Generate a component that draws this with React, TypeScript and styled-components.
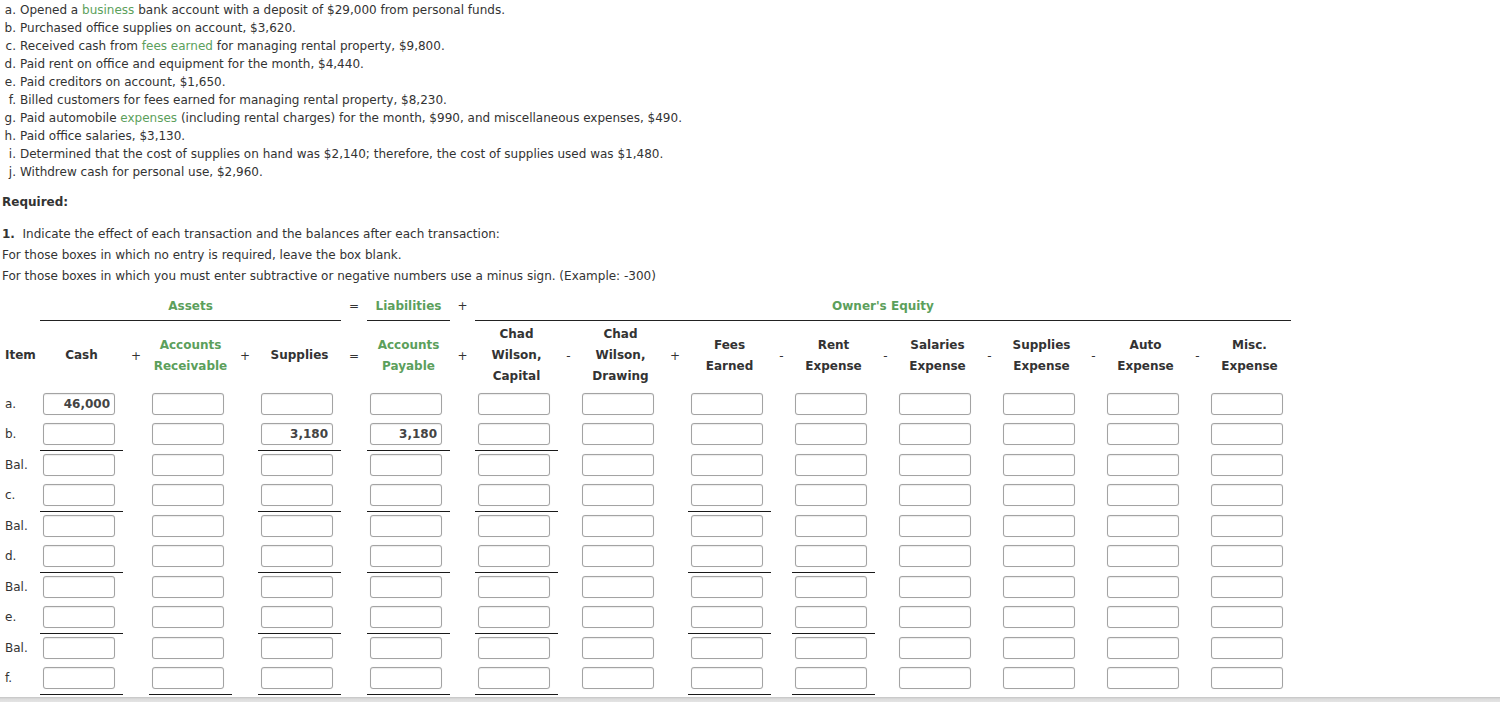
import React from "react";
import styled, { createGlobalStyle } from "styled-components";

const GlobalStyle = createGlobalStyle`
  html, body {
    margin: 0;
    padding: 0;
    background: #ffffff;
    overflow: hidden;
  }
  body {
    font-family: "DejaVu Sans", Verdana, sans-serif;
    font-size: 12px;
    color: #333333;
  }
`;

const Link = styled.span`
  color: #5c9f5c;
`;

type Transaction = {
  letter: string;
  text: React.ReactNode;
};

const transactions: Transaction[] = [
  {
    letter: "a.",
    text: (
      <>
        Opened a <Link>business</Link> bank account with a deposit of $29,000
        from personal funds.
      </>
    ),
  },
  { letter: "b.", text: "Purchased office supplies on account, $3,620." },
  {
    letter: "c.",
    text: (
      <>
        Received cash from <Link>fees earned</Link> for managing rental
        property, $9,800.
      </>
    ),
  },
  {
    letter: "d.",
    text: "Paid rent on office and equipment for the month, $4,440.",
  },
  { letter: "e.", text: "Paid creditors on account, $1,650." },
  {
    letter: "f.",
    text: "Billed customers for fees earned for managing rental property, $8,230.",
  },
  {
    letter: "g.",
    text: (
      <>
        Paid automobile <Link>expenses</Link> (including rental charges) for
        the month, $990, and miscellaneous expenses, $490.
      </>
    ),
  },
  { letter: "h.", text: "Paid office salaries, $3,130." },
  {
    letter: "i.",
    text: "Determined that the cost of supplies on hand was $2,140; therefore, the cost of supplies used was $1,480.",
  },
  { letter: "j.", text: "Withdrew cash for personal use, $2,960." },
];

type Column = {
  key: string;
  label: React.ReactNode;
  green?: boolean;
  op?: string;
};

// op = the sign printed before this column
const columns: Column[] = [
  { key: "cash", label: "Cash" },
  { key: "ar", label: <>Accounts<br />Receivable</>, green: true, op: "+" },
  { key: "supplies", label: "Supplies", op: "+" },
  { key: "ap", label: <>Accounts<br />Payable</>, green: true, op: "=" },
  { key: "capital", label: <>Chad<br />Wilson,<br />Capital</>, op: "+" },
  { key: "drawing", label: <>Chad<br />Wilson,<br />Drawing</>, op: "-" },
  { key: "fees", label: <>Fees<br />Earned</>, op: "+" },
  { key: "rent", label: <>Rent<br />Expense</>, op: "-" },
  { key: "salaries", label: <>Salaries<br />Expense</>, op: "-" },
  { key: "suppexp", label: <>Supplies<br />Expense</>, op: "-" },
  { key: "auto", label: <>Auto<br />Expense</>, op: "-" },
  { key: "misc", label: <>Misc.<br />Expense</>, op: "-" },
];

type Row = {
  label: string;
  lines: string[];
  values?: Record<string, string>;
  bal?: boolean;
};

const rows: Row[] = [
  { label: "a.", lines: [], values: { cash: "46,000" } },
  {
    label: "b.",
    lines: ["cash", "supplies", "ap", "capital"],
    values: { supplies: "3,180", ap: "3,180" },
  },
  { label: "Bal.", lines: [], bal: true },
  { label: "c.", lines: ["cash", "supplies", "ap", "capital", "fees"] },
  { label: "Bal.", lines: [], bal: true },
  { label: "d.", lines: ["cash", "supplies", "ap", "capital", "fees", "rent"] },
  { label: "Bal.", lines: [], bal: true },
  { label: "e.", lines: ["cash", "supplies", "ap", "capital", "fees", "rent"] },
  { label: "Bal.", lines: [], bal: true },
  {
    label: "f.",
    lines: ["cash", "ar", "supplies", "ap", "capital", "fees", "rent"],
  },
];

const gridTemplate = [
  "40px",
  ...columns.flatMap((c, i) =>
    i === 0 ? ["83px"] : [`${c.op === "-" ? 21 : i === 4 ? 25 : 26}px`, "83px"]
  ),
].join(" ");

const App = () => {
  return (
    <Page>
      <GlobalStyle />
      <List>
        {transactions.map((t) => (
          <ListItem key={t.letter}>
            <Marker>{t.letter}</Marker>
            <span>{t.text}</span>
          </ListItem>
        ))}
      </List>

      <Required>Required:</Required>

      <Instructions>
        <Instruction>
          <b>1.</b>&nbsp; Indicate the effect of each transaction and the
          balances after each transaction:
        </Instruction>
        <Instruction>
          For those boxes in which no entry is required, leave the box blank.
        </Instruction>
        <Instruction>
          For those boxes in which you must enter subtractive or negative
          numbers use a minus sign. (Example: -300)
        </Instruction>
      </Instructions>

      <Table $columns={gridTemplate}>
        {/* group headings */}
        <Blank />
        <GroupHead $span={5}>Assets</GroupHead>
        <GroupOp>=</GroupOp>
        <GroupHead $span={1}>Liabilities</GroupHead>
        <GroupOp>+</GroupOp>
        <GroupHead $span={15}>Owner's Equity</GroupHead>

        {/* column headings */}
        <ItemHead>Item</ItemHead>
        {columns.map((c) => (
          <React.Fragment key={c.key}>
            {c.op && <HeadOp>{c.op}</HeadOp>}
            <ColHead $green={c.green}>{c.label}</ColHead>
          </React.Fragment>
        ))}

        {rows.map((r, ri) => {
          const lined = ri > 0 && !r.bal;
          return (
            <React.Fragment key={ri}>
              <RowLabel $lined={lined}>{r.label}</RowLabel>
              {columns.map((c) => (
                <React.Fragment key={c.key}>
                  {c.op && <OpCell $lined={lined} />}
                  <InputCell $lined={lined} $rule={r.lines.includes(c.key)}>
                    <Box type="text" defaultValue={r.values?.[c.key] ?? ""} />
                  </InputCell>
                </React.Fragment>
              ))}
            </React.Fragment>
          );
        })}
      </Table>
      <ScrollEdge />
    </Page>
  );
};

const Page = styled.div`
  padding: 1px 0 0 1px;
`;

const List = styled.div`
  display: flex;
  flex-direction: column;
`;

const ListItem = styled.div`
  display: flex;
  line-height: 18px;
  white-space: nowrap;
`;

const Marker = styled.span`
  width: 15px;
  text-align: right;
  margin-right: 4px;
`;

const Required = styled.div`
  margin-top: 12px;
  line-height: 18px;
  font-weight: bold;
  padding-left: 1px;
`;

const Instructions = styled.div`
  margin-top: 13px;
  padding-left: 1px;
`;

const Instruction = styled.div`
  line-height: 21px;
`;

const Table = styled.div<{ $columns: string }>`
  display: grid;
  grid-template-columns: ${(p) => p.$columns};
  margin-top: 9px;
  margin-left: -1px;
  width: 1292px;
`;

const Blank = styled.div``;

const GroupHead = styled.div<{ $span: number }>`
  grid-column: span ${(p) => p.$span};
  text-align: center;
  font-weight: bold;
  color: #5c9f5c;
  line-height: 21px;
  padding-bottom: 3px;
  border-bottom: 1px solid #222222;
`;

const GroupOp = styled.div`
  text-align: center;
  line-height: 21px;
`;

const ItemHead = styled.div`
  font-weight: bold;
  padding: 3px 0 3px 5px;
  display: flex;
  align-items: center;
  line-height: 21px;
`;

const HeadOp = styled.div`
  display: flex;
  align-items: center;
  justify-content: center;
  padding: 3px 0;
`;

const ColHead = styled.div<{ $green?: boolean }>`
  display: flex;
  align-items: center;
  justify-content: center;
  text-align: center;
  font-weight: bold;
  line-height: 21px;
  padding: 3px 0;
  color: ${(p) => (p.$green ? "#5c9f5c" : "#333333")};
`;

const RowLabel = styled.div<{ $lined: boolean }>`
  padding: ${(p) => (p.$lined ? "4px 0 5px 5px" : "3px 0 4px 5px")};
  line-height: 22px;
  border-bottom: ${(p) => (p.$lined ? "1px solid transparent" : "none")};
`;

const OpCell = styled.div<{ $lined: boolean }>`
  border-bottom: ${(p) => (p.$lined ? "1px solid transparent" : "none")};
`;

const InputCell = styled.div<{ $lined: boolean; $rule: boolean }>`
  padding: ${(p) => (p.$lined ? "4px 0 5px 3px" : "3px 0 4px 3px")};
  border-bottom: ${(p) =>
    p.$lined ? `1px solid ${p.$rule ? "#1a1a1a" : "transparent"}` : "none"};
`;

const Box = styled.input`
  box-sizing: border-box;
  display: block;
  width: 72px;
  height: 22px;
  margin: 0;
  padding: 0 4px;
  border: 1px solid #a3a3a3;
  border-radius: 3px;
  box-shadow: inset 0 1px 1px rgba(0, 0, 0, 0.08), 0 0 1px rgba(0, 0, 0, 0.15);
  background: #ffffff;
  font-family: "DejaVu Sans", Verdana, sans-serif;
  font-size: 12px;
  font-weight: bold;
  color: #444444;
  text-align: right;
  outline: none;
`;

const ScrollEdge = styled.div`
  position: fixed;
  left: 0;
  right: 0;
  bottom: 0;
  height: 5px;
  background: linear-gradient(#c4c4c4, #dcdcdc 40%, #e4e4e4);
`;

export default App;
